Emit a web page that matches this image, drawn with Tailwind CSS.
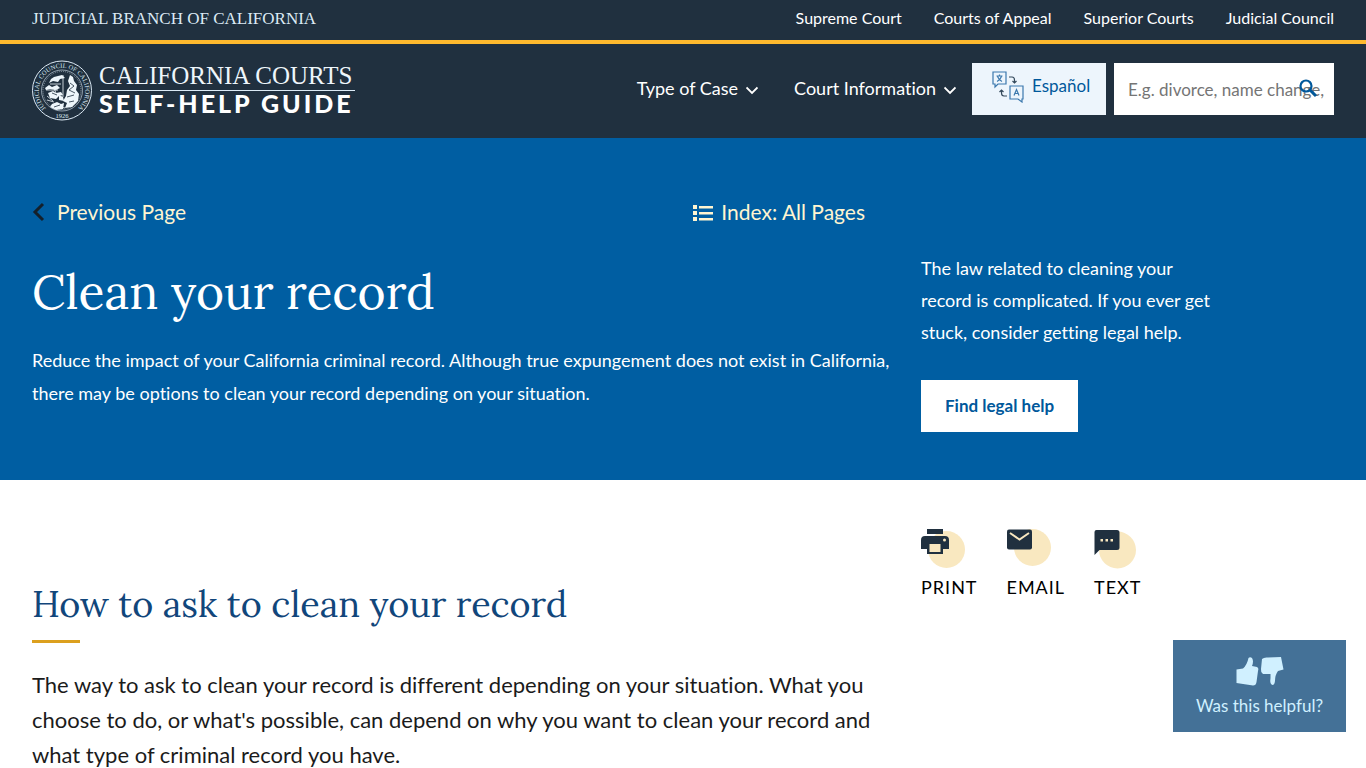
<!DOCTYPE html>
<html lang="en">

<head>
    <meta charset="UTF-8">
    <meta name="viewport" content="width=device-width, initial-scale=1.0">
    <title>Clean your record | California Courts Self-Help Guide</title>
    <script src="https://cdn.jsdelivr.net/npm/@tailwindcss/browser@4"></script>
</head>

<body class="bg-white font-[Lato,sans-serif] text-[#1b1b1b] [font-variant-ligatures:none]">
    <header class="bg-[#20303f] text-white">
        <div class="flex h-11 items-center justify-between border-b-4 border-[#fdb92e] px-8 pb-1">
            <a class="pt-0.5 font-['Liberation_Serif',serif] text-[17px] text-[#dceaf5]" href="#">JUDICIAL BRANCH OF CALIFORNIA</a>
            <nav class="flex gap-8 text-base">
                <a class="hover:underline" href="#">Supreme Court</a>
                <a class="hover:underline" href="#">Courts of Appeal</a>
                <a class="hover:underline" href="#">Superior Courts</a>
                <a class="hover:underline" href="#">Judicial Council</a>
            </nav>
        </div>

        <div class="flex h-[94px] items-center justify-between px-8">
            <a href="#" aria-label="California Courts Self-Help Guide">
                <svg class="h-16 w-[330px]" viewBox="0 0 330 64" fill="none">
                    <!-- seal -->
                    <g stroke="#dceaf5">
                        <circle cx="30" cy="31.500" r="29.500" stroke-width="1" />
                        <circle cx="30" cy="31.500" r="20.500" stroke-width=".6" />
                        <circle cx="30" cy="31.500" r="19" stroke-width=".5" stroke-dasharray="1 1" />
                    </g>
                    <path id="ring" d="M14.500 49.500A23.300 23.300 0 1 1 45.500 49.500" />
                    <text fill="#dceaf5" font-family="Liberation Serif, serif" font-size="6.500">
                        <textPath href="#ring" startOffset="50%" text-anchor="middle">JUDICIAL COUNCIL OF CALIFORNIA</textPath>
                    </text>
                    <text x="30" y="59" fill="#dceaf5" text-anchor="middle" font-family="Liberation Serif, serif" font-size="6.500">1926</text>
                    <g fill="#eef6fb">
                        <path d="M38 16l3 2 1 4 3 4-1 5 3 4-1 7-6 6-7 1 2-5-4-2 3-5 1-6 3-4-2-5z" />
                        <path d="M20 45l5-2 4 2 3-1-1 6-7 1-6-3zM16 34l5-2 3 2 5-1 2 3-4 1-3 3-6-1zM13 29l4-3 3 2 5-2 3 3-4 2-6-1-4 1z" />
                        <path d="M19 20l3-2 8-2 3 3-5 1-2 3-5-1-4 2zM27 36l4 2 1 4-5-1z" />
                    </g>
                    <path stroke="#eef6fb" stroke-width=".8" d="M31 16v22M14 31h12M15 37l6 5M18 25h11M15 41l7 2M22 29l3 8M35 44l8-4M25 47l8 2" />
                    <path stroke="#20303f" stroke-width=".8" d="M38 24l4 3-5 4 6 3M35 38l7-2M20 34l5 2M22 48l6-2M37 43l5-1" />
                    <!-- wordmark -->
                    <text x="67" y="25" fill="#eef6fb" font-family="Liberation Serif, serif" font-size="25">CALIFORNIA COURTS</text>
                    <path stroke="#dceaf5" stroke-width="1.200" d="M68 31.500h255" />
                    <text x="67" y="54" fill="#fff" font-family="Lato, sans-serif" font-size="25" font-weight="900" letter-spacing="3">SELF-HELP GUIDE</text>
                </svg>
            </a>

            <div class="mb-1 flex items-center">
                <nav class="mr-4 flex gap-9 pb-0.5 text-lg">
                    <button type="button" class="flex items-center gap-2">Type of Case
                        <svg class="mt-1 size-3" viewBox="0 0 12 12" fill="none" stroke="currentColor" stroke-width="1.800"><path d="M.5 3.500 6 9l5.500-5.500" /></svg>
                    </button>
                    <button type="button" class="flex items-center gap-2">Court Information
                        <svg class="mt-1 size-3" viewBox="0 0 12 12" fill="none" stroke="currentColor" stroke-width="1.800"><path d="M.5 3.500 6 9l5.500-5.500" /></svg>
                    </button>
                </nav>
                <a class="mr-2 flex h-[52px] w-[134px] items-center gap-2 bg-[#edf5fc] pb-1 pl-5 text-[17px] text-[#00589b]" href="#">
                    <svg class="size-8" viewBox="0 0 32 32" fill="none" stroke="#3b78ad" stroke-width="1.200">
                        <path d="M1 1h13v12H6l-3 3v-3H1zM18 15h13v13h-1v3l-4-3h-8z" />
                        <path d="M4.500 5h6M7.500 3.500V5M9.500 5.500c-1 2.500-2.500 4-4.500 5M5.500 5.500c1 2.500 2.500 4 4.500 5M22 24.500l2.500-6 2.500 6M23 22.500h3" />
                        <path stroke="#34495b" d="M17 6h3q2.500 0 2.500 3v3M20.500 10l2 2 2-2M15 25h-3q-2.500 0-2.500-3v-3M7.500 21l2-2 2 2" />
                    </svg>
                    <span class="pb-0.5">Español</span>
                </a>
                <form class="relative w-[220px]" role="search">
                    <label class="sr-only" for="search">Search</label>
                    <input id="search" type="text" placeholder="E.g. divorce, name change," class="h-[52px] w-full bg-white pr-2 pl-3.5 text-[17px] text-gray-900 placeholder:text-[#757575]">
                    <button type="submit" aria-label="Search" class="absolute top-4 right-4">
                        <svg class="size-5" viewBox="0 0 20 20" fill="none" stroke="#00589b"><circle cx="8" cy="7" r="5.500" stroke-width="2.200" /><path stroke-width="3" d="m12 11 6 6" /></svg>
                    </button>
                </form>
            </div>
        </div>
    </header>

    <main>
        <section class="grid min-h-[342px] grid-cols-[minmax(0,1fr)_413px] gap-10 bg-[#005ea2] px-8 pt-[58px] pb-12 text-lg text-white">
            <div>
                <div class="flex items-center justify-between pr-4 text-[21px] leading-8 text-[#fff5d1]">
                    <a class="flex items-center gap-3" href="#">
                        <svg class="h-5 w-[13px]" viewBox="0 0 13 20" fill="none" stroke="#14202b" stroke-width="3"><path d="m11 2-8 8 8 8" /></svg>
                        Previous Page
                    </a>
                    <a class="flex items-center gap-2" href="#">
                        <svg class="h-5 w-5" viewBox="0 0 20 20" fill="currentColor"><path d="M0 3h4v4H0zm6 1h14v2.500H6zM0 9h4v4H0zm6 1h14v2.500H6zM0 15h4v4H0zm6 1h14v2.500H6z" /></svg>
                        Index: All Pages
                    </a>
                </div>
                <h1 class="mt-8 font-[Lora,'Liberation_Serif',serif] text-5xl leading-[64px]">Clean your record</h1>
                <p class="-mr-5 mt-5 leading-[33px]">Reduce the impact of your California criminal record. Although true expungement does not exist in California, there may be options to clean your record depending on your situation.</p>
            </div>
            <div class="pt-14">
                <p class="max-w-[300px] leading-8">The law related to cleaning your record is complicated. If you ever get stuck, consider getting legal help.</p>
                <a class="mt-8 inline-block bg-white px-6 py-3 text-[17px] leading-7 font-bold text-[#00589b]" href="#">Find legal help</a>
            </div>
        </section>

        <section class="grid grid-cols-[minmax(0,1fr)_413px] gap-10 px-8 pt-12">
            <div class="pt-12">
                <h2 class="font-[Lora,'Liberation_Serif',serif] text-4xl leading-[56px] text-[#11467b]">How to ask to clean your record</h2>
                <div class="mt-2 h-[3px] w-12 bg-[#dca01e]"></div>
                <p class="mt-6 text-[22px] leading-[35px]">The way to ask to clean your record is different depending on your situation. What you choose to do, or what's possible, can depend on why you want to clean your record and what type of criminal record you have.</p>
            </div>
            <div class="flex items-start gap-[29px] text-lg tracking-[1px] text-black">
                <button type="button" class="flex flex-col gap-[3px] text-left">
                    <svg class="h-[42px] w-11" viewBox="0 0 44 42">
                        <circle cx="25.500" cy="21.500" r="18.500" fill="#f9e8c0" />
                        <path fill="#20303f" d="M6 1h16v5H6zM4 8h20q4 0 4 4v9h-6v5H6v-5H0v-9q0-4 4-4z" />
                        <path d="M8.500 16h11v8h-11z" fill="#f9e8c0" /><circle cx="23.500" cy="12" r="1.500" fill="#f9e8c0" />
                    </svg>
                    PRINT
                </button>
                <button type="button" class="flex flex-col gap-[3px] text-left">
                    <svg class="h-[42px] w-[46px]" viewBox="0 0 46 42">
                        <circle cx="25.500" cy="19.500" r="18.500" fill="#f9e8c0" />
                        <rect x="0" y="1.500" width="25" height="20" rx="2" fill="#20303f" /><path fill="none" stroke="#f9e8c0" stroke-width="2" d="m3 5 9.500 6.500L22 5" />
                    </svg>
                    EMAIL
                </button>
                <button type="button" class="flex flex-col gap-[3px] text-left">
                    <svg class="h-[42px] w-[46px]" viewBox="0 0 46 42">
                        <circle cx="23.500" cy="22" r="18.500" fill="#f9e8c0" />
                        <path fill="#20303f" d="M2.500 2H23q2.500 0 2.500 2.500v15Q25.500 22 23 22H5.500L.5 27V4q0-2 2-2z" />
                        <path fill="#f9e8c0" d="M6.500 11H9v2.500H6.500zm5 0H14v2.500h-2.500zm5 0H19v2.500h-2.500z" />
                    </svg>
                    TEXT
                </button>
            </div>
        </section>
    </main>

    <!-- feedback button stays in the corner -->
    <button type="button" class="fixed right-5 bottom-9 flex h-[92px] w-[173px] flex-col items-center bg-[#447197] pt-4 text-[17px] text-[#d0f0ff]">
        <svg class="h-[30px] w-[50px]" viewBox="0 0 50 30" fill="currentColor">
            <path d="M1.500 13.500 8 12.500Q12 9 13.500 2q1.500-1.700 3.500 0 2 3 0 8l5 1q2 1 1 4l-1.500 11q-.5 3.500-3.500 3.500L1.500 27z" />
            <path d="M27 3q2-2 6-1.500L46 1l2.500 12.500L43 15q-3 4-3 10-.5 4-2.500 4-3-1-2-7v-4H28q-2.500-2-2-5z" />
        </svg>
        <span class="mt-1 leading-8">Was this helpful?</span>
    </button>
</body>

</html>
